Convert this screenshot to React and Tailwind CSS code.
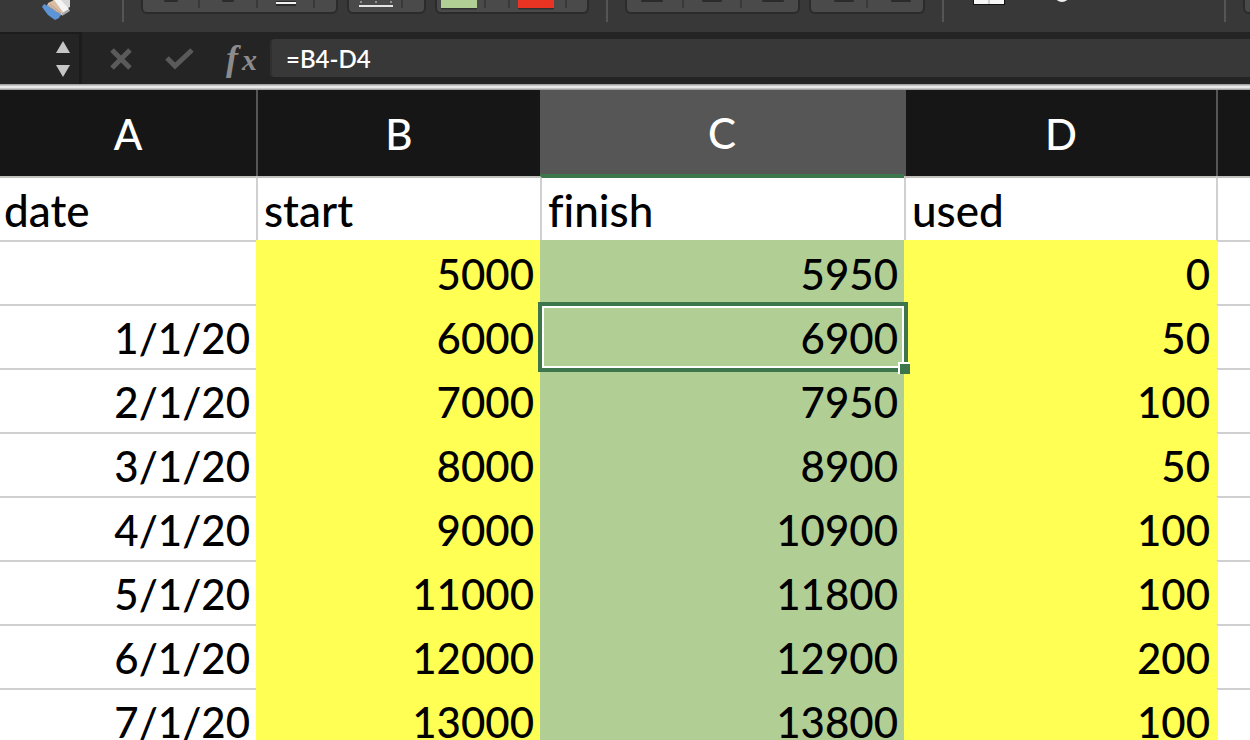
import { useState } from "react";
import clsx from "clsx";

const columns = [
  { id: "A", width: "w-[256px]" },
  { id: "B", width: "w-[284px]" },
  { id: "C", width: "w-[364px]", selected: true },
  { id: "D", width: "w-[312px]" },
  { id: "", width: "" },
];

const labels = ["date", "start", "finish", "used"];

const rows = [
  ["", 5000, 5950, 0],
  ["1/1/20", 6000, 6900, 50],
  ["2/1/20", 7000, 7950, 100],
  ["3/1/20", 8000, 8900, 50],
  ["4/1/20", 9000, 10900, 100],
  ["5/1/20", 11000, 11800, 100],
  ["6/1/20", 12000, 12900, 200],
  ["7/1/20", 13000, 13800, 100],
];

// background + grid line colours of the data cells, one entry per column
const fills = [
  "border-l-white border-t-[#d0d0d0] bg-white",
  "border-[#ffff54] bg-[#ffff54]",
  "border-[#b1cf95] bg-[#b1cf95]",
  "border-[#ffff54] bg-[#ffff54]",
];

function Tool({ label, width, children }) {
  return (
    <button
      aria-label={label}
      className={clsx("flex h-[11px] shrink-0 justify-center", width)}
    >
      {children}
    </button>
  );
}

function ToolGroup({ children }) {
  return (
    <div className="flex h-[14px] shrink-0 rounded-b-md border-2 border-t-0 border-[#2b2b2b] bg-[#4a4a4a]">
      {children}
    </div>
  );
}

function Split() {
  return <div className="h-2 w-0.5 shrink-0 bg-[#393939]" />;
}

function Divider() {
  return <div className="mx-2 h-[22px] w-0.5 shrink-0 bg-[#555]" />;
}

function Mark({ width = 20, shift = 0 }) {
  return (
    <svg width="40" height="10" viewBox="0 0 40 10">
      <rect x={20 - width / 2 + shift} width={width} height="2" rx="1" fill="#2b2b2b" />
    </svg>
  );
}

function Swatch({ color }) {
  return (
    <svg width="40" height="10" viewBox="0 0 40 10">
      <rect width="36" height="9.5" rx="1" fill="#303030" />
      <rect width="36" height="8" fill={color} />
    </svg>
  );
}

function Ribbon() {
  return (
    <div className="flex h-8 shrink-0 items-start gap-[9px] overflow-hidden bg-[#383838]">
      <button aria-label="Format painter" className="flex w-[105px] shrink-0 pl-[42px]">
        <svg width="30" height="21" viewBox="0 0 30 21">
          <path d="M17 0H28V7L24 9L18 0Z" fill="#d8d8d8" />
          <path d="M11 0H19L27 9V11L19 15Z" fill="#f4f4f4" />
          <path d="M20 13L27 9L28 11L20 16Z" fill="#aaa" />
          <path d="M6 3L12 0L21 12L18 16L5 6Z" fill="#d9bea5" />
          <path d="M2 4L6 6L19 14L17 18L13 20L6 15L0 7Z" fill="#5d94d6" />
          <path d="M8 4L19 13M6 5L15 12" stroke="#b9a18f" strokeWidth="1" />
        </svg>
      </button>
      <Divider />
      <ToolGroup>
        <Tool label="Bold" width="w-[55px]"><Mark width={14} /></Tool>
        <Split />
        <Tool label="Italic" width="w-[56px]"><Mark width={12} /></Tool>
        <Split />
        <Tool label="Underline" width="w-[55px]">
          <svg width="40" height="10" viewBox="0 0 40 10">
            <rect x="10" y="1" width="20" height="5" fill="#2b2b2b" />
            <rect x="10" y="2" width="20" height="2" fill="#f0f0f0" />
          </svg>
        </Tool>
        <Split />
        <Tool label="Underline style" width="w-[21px]" />
      </ToolGroup>
      <ToolGroup>
        <Tool label="Borders" width="w-[52px]">
          <svg width="40" height="10" viewBox="0 0 40 10">
            <path d="M5 2h2M20 2h2M35 2h2" stroke="#909090" strokeWidth="2" />
            <rect x="4" y="5" width="34" height="2" fill="#e4e4e4" />
          </svg>
        </Tool>
        <Split />
        <Tool label="Border style" width="w-[21px]" />
      </ToolGroup>
      <ToolGroup>
        <Tool label="Fill colour" width="w-[47px]"><Swatch color="#b1cf95" /></Tool>
        <Split />
        <Tool label="Choose fill colour" width="w-[22px]" />
        <Split />
        <Tool label="Font colour" width="w-[55px]"><Swatch color="#e93423" /></Tool>
        <Split />
        <Tool label="Choose font colour" width="w-[20px]" />
      </ToolGroup>
      <Divider />
      <ToolGroup>
        <Tool label="Align left" width="w-[55px]"><Mark width={22} shift={-3} /></Tool>
        <Split />
        <Tool label="Align centre" width="w-[56px]"><Mark /></Tool>
        <Split />
        <Tool label="Align right" width="w-[56px]"><Mark width={22} shift={3} /></Tool>
      </ToolGroup>
      <ToolGroup>
        <Tool label="Decrease indent" width="w-[55px]"><Mark shift={5} /></Tool>
        <Split />
        <Tool label="Increase indent" width="w-[55px]"><Mark shift={5} /></Tool>
      </ToolGroup>
      <Divider />
      <button aria-label="Merge cells" className="flex w-[246px] shrink-0 pl-[12px]">
        <svg width="120" height="6" viewBox="0 0 120 6">
          <rect x="0" y="-3" width="32" height="8" fill="#111" />
          <rect x="1" y="-2" width="30" height="6" fill="#f6f6f6" />
          <path d="M16 0V4" stroke="#aaa" />
          <path d="M84 -1Q89 3 94 -1" stroke="#f0f0f0" strokeWidth="2" fill="none" />
        </svg>
      </button>
      <Divider />
      <ToolGroup>
        <Tool label="Number format" width="w-[120px]" />
      </ToolGroup>
    </div>
  );
}

function FormulaBar({ value, onChange }) {
  return (
    <div className="flex h-[52px] shrink-0 items-center bg-[#242424]">
      <div className="flex h-full w-[82px] shrink-0 items-center border-t-2 border-r-3 border-[#1c1c1c]">
        <input aria-label="Name box" className="w-[55px] bg-transparent text-white outline-none" />
        <div className="flex flex-col gap-3">
          <button aria-label="Previous">
            <svg className="block" width="16" height="12" viewBox="0 0 16 12">
              <path d="M8 0L15 12H1Z" fill="#c6c6c6" />
            </svg>
          </button>
          <button aria-label="Next">
            <svg className="block" width="16" height="12" viewBox="0 0 16 12">
              <path d="M1 0H15L8 12Z" fill="#c6c6c6" />
            </svg>
          </button>
        </div>
      </div>
      <div className="flex w-[188px] shrink-0 items-center pt-0.5 pl-7">
        <button aria-label="Cancel">
          <svg width="22" height="22" viewBox="0 0 22 22">
            <path d="M2 2L20 20M20 2L2 20" stroke="#5a5a5a" strokeWidth="5" />
          </svg>
        </button>
        <button aria-label="Enter" className="ml-8">
          <svg width="30" height="22" viewBox="0 0 30 22">
            <path d="M3 10L11 18L28 2" fill="none" stroke="#5a5a5a" strokeWidth="5" />
          </svg>
        </button>
        <button
          aria-label="Insert function"
          className="ml-8 flex items-baseline font-['Liberation_Serif',serif] text-4xl leading-8 text-[#8c8c8c] italic"
        >
          <span className="font-bold">f</span>
          <span className="ml-1 text-3xl leading-8 font-bold">x</span>
        </button>
      </div>
      <input
        aria-label="Formula"
        value={value}
        onChange={(e) => onChange(e.target.value)}
        className="h-[38px] min-w-0 flex-1 rounded-l-sm border-l-2 border-[#303030] bg-[#383838] px-3.5 text-2xl font-semibold text-white outline-none"
      />
    </div>
  );
}

function Sheet() {
  return (
    <table className="w-full table-fixed border-separate border-spacing-0 text-[42px] leading-[60px] font-medium text-black">
      <colgroup>
        {columns.map((col) => (
          <col key={col.id} className={col.width} />
        ))}
      </colgroup>
      <thead>
        <tr className="h-[86px] text-white">
          {columns.map((col, i) => (
            <th
              key={col.id}
              scope="col"
              className={clsx(
                "p-0 pt-0.5 font-medium",
                i > 0 && !col.selected && "border-l-2 border-[#565656]",
                col.selected ? "border-b-2 border-b-[#3d764b] bg-[#565656]" : "bg-[#161616]"
              )}
            >
              {col.id}
            </th>
          ))}
        </tr>
      </thead>
      <tbody>
        <tr className="h-16 text-[44px]">
          {columns.map((col, i) => (
            <td
              key={col.id}
              className={clsx(
                "border-t-2 bg-white pt-0.5 pr-1.5 pb-0 pl-1",
                i > 0 && "border-l-2 border-l-[#d0d0d0] pl-1.5",
                col.selected ? "border-t-[#3d764b]" : "border-t-[#c0c0bc]"
              )}
            >
              {labels[i]}
            </td>
          ))}
        </tr>
        {rows.map((row, r) => (
          <tr key={r} className="h-16">
            {row.map((cell, c) => (
              <td
                key={c}
                className={clsx(
                  "border-t-2 pt-0.5 pr-1.5 pb-0 pl-1 text-right",
                  c > 0 && "border-l-2",
                  fills[c],
                  r === 1 && c === 2 && "relative z-10"
                )}
              >
                {cell}
                {r === 1 && c === 2 && (
                  <div className="absolute -inset-1 border-4 border-[#3d764b]">
                    <div className="h-full border-2 border-white" />
                    <div className="absolute -right-1.5 -bottom-1.5 size-3 border-t-2 border-l-2 border-white bg-[#3d764b]" />
                  </div>
                )}
              </td>
            ))}
            <td className="border-t-2 border-l-2 border-t-[#d0d0d0] border-l-[#ffff54] bg-white p-0" />
          </tr>
        ))}
      </tbody>
    </table>
  );
}

export default function App() {
  const [formula, setFormula] = useState("=B4-D4");

  return (
    <div className="flex h-screen flex-col overflow-hidden bg-white font-['Lato',sans-serif] [font-variant-ligatures:none]">
      <Ribbon />
      <FormulaBar value={formula} onChange={setFormula} />
      <div className="h-1.5 shrink-0 bg-linear-to-b from-[#929292] via-[#fafafa] to-[#929292]" />
      <div className="min-h-0 flex-1 overflow-hidden">
        <Sheet />
      </div>
    </div>
  );
}
